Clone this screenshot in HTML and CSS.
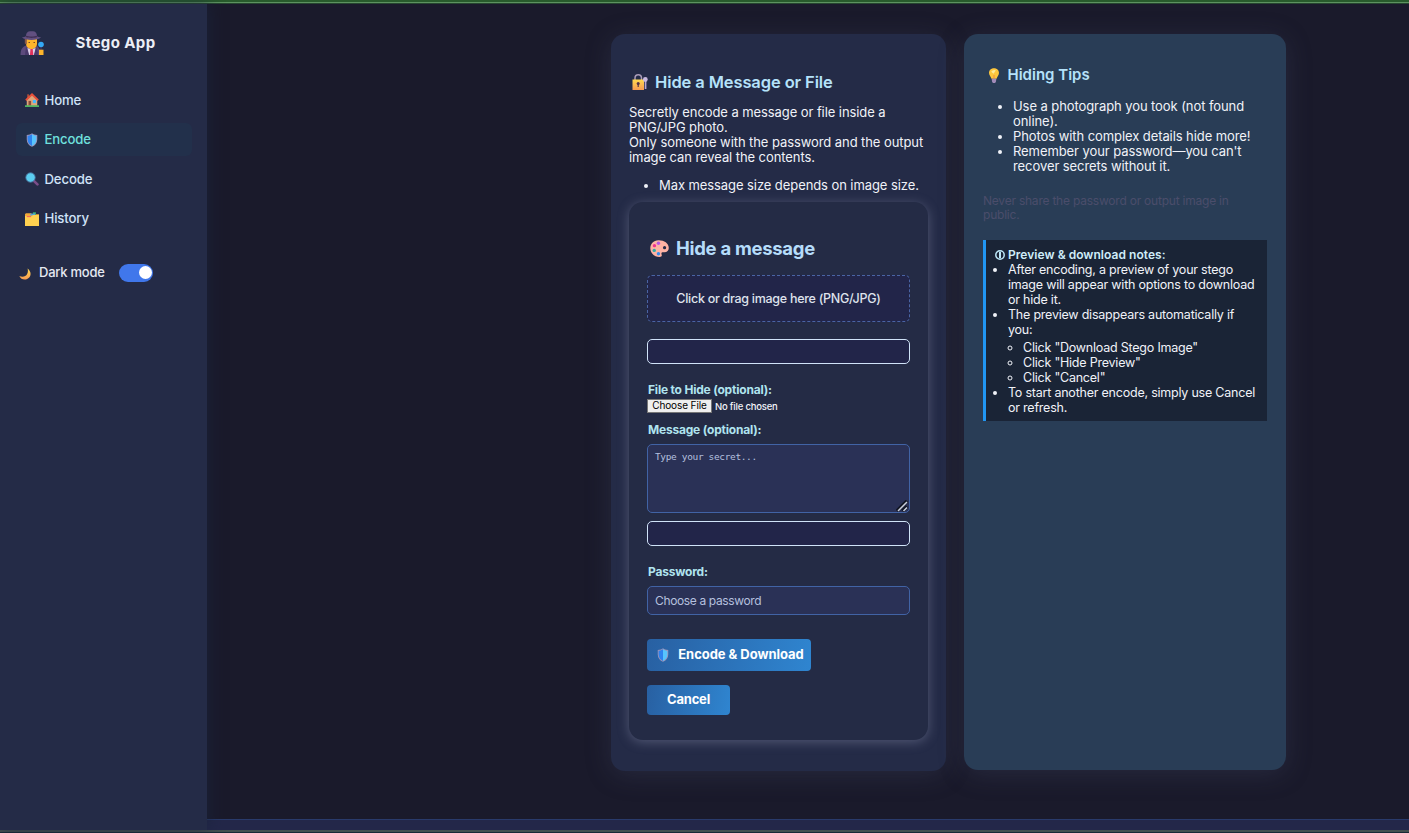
FILE: index.html
```html
<!DOCTYPE html>
<html lang="en">
<head>
<meta charset="utf-8">
<title>Stego App</title>
<link rel="stylesheet" href="styles.css">
</head>
<body>
<svg width="0" height="0" class="defs" aria-hidden="true">
  <defs>
    <linearGradient id="gold" x1="0" y1="0" x2="0" y2="1"><stop offset="0" stop-color="#ffd94f"/><stop offset="1" stop-color="#f79a52"/></linearGradient>
    <symbol id="shield" viewBox="0 0 16 16"><path d="M8 .3C6.500 1.500 4.500 2 2 2.200V7.500c0 4 2.500 7 6 8.300 3.500-1.300 6-4.300 6-8.300V2.200C11.500 2 9.500 1.500 8 .3z" fill="#9c93b8"/><path d="M8 1.300C6.500 2.300 5 2.900 3 3.100V7.500c0 3.400 2 6 5 7.300z" fill="#2f83ee"/><path d="M8 1.300c1.500 1 3 1.600 5 1.800V7.500c0 3.400-2 6-5 7.300z" fill="#57c4fd"/></symbol>
  </defs>
</svg>
<div class="strip-top"></div>
<div class="app">
  <aside class="sidebar">
    <div class="brand">
      <svg class="brand-icon" viewBox="0 0 24 24"><path d="M.5 24c0-5 1.500-8.500 6-9.500h9.500c3 1 4 4.500 4 9.500z" fill="#5c4a7c"/><path d="M6 7.500h11v5c0 3.200-2.300 5.500-5.500 5.500S6 15.700 6 12.500z" fill="#fdb52c"/><path d="M4.800 7h2v6.500l-2-1z" fill="#8b5a48"/><path d="M7.500 17l4 1.500 4-1.500-1.500 7H9z" fill="#ddd0e8"/><path d="M10.500 18h2.200l.6 6h-3.400z" fill="#e2325c"/><path d="M6 15l3 9H5zM17 15l-3 9h4z" fill="#49386a"/><path d="M1.800 6.300c1.700 0 3-.3 4-1C6.500 1.500 7.500.2 11.500.3c4-.1 5 1.200 5.700 5 1 .7 2.300 1 4 1-2 1.900-5.500 2.700-9.700 2.700S3.800 8.200 1.800 6.300z" fill="#625080"/><path d="M6 4.700c3 1 8 1 11 0l.3 1.300c-3 1.200-8.500 1.200-11.500 0z" fill="#423055"/><path d="M8.500 11.500h1.500M13.500 11.500H15" stroke="#7a4b28" stroke-width="1.200"/><path d="M20.300 16h1.400v3h-1.400z" fill="#43365d"/><circle cx="21" cy="13.500" r="2.800" fill="#34a9f5"/><path d="M19 18.700h4.500V24H19z" fill="#fdb52c"/></svg>
      <span class="brand-name">Stego App</span>
    </div>
    <nav class="nav">
      <a class="nav-item"><svg class="nav-icon" viewBox="0 0 16 16"><path d="M2 8l6-6 6 6v7H2z" fill="#dca67b"/><path d="M2.500 1.500h2.200V6H2.500z" fill="#a84e3c"/><path d="M8 0L.3 7.500l1.300 1.500L8 3l6.400 6 1.300-1.500z" fill="#e8503a"/><path d="M4 9h3v5.500H4z" fill="#8a4a39"/><path d="M9 8h3.500v3.500H9z" fill="#45b7ff"/><path d="M0 14h16v2H0z" fill="#51b461"/></svg><span>Home</span></a>
      <a class="nav-item active"><svg class="nav-icon"><use href="#shield"/></svg><span>Encode</span></a>
      <a class="nav-item"><svg class="nav-icon" viewBox="0 0 16 16"><path d="M9.500 9.500l4.700 4.700" stroke="#7b4d89" stroke-width="3" stroke-linecap="round"/><circle cx="6.300" cy="6.300" r="5.400" fill="#5bcdf0" stroke="#486f9a" stroke-width="1"/></svg><span>Decode</span></a>
      <a class="nav-item"><svg class="nav-icon" viewBox="0 0 16 16"><path d="M0 2.500L1 1.500h6l1 1h8V16H0z" fill="#f2a93a"/><path d="M9 .3h3.500v3H9z" fill="#3fae72"/><path d="M6 1.800h5.500V4H6z" fill="#57a4d8"/><path d="M0 4.500h8l1-1.200h7V16H0z" fill="#ffd150"/><path d="M2 5.300h5" stroke="#f4525e" stroke-width="1.100"/></svg><span>History</span></a>
    </nav>
    <div class="mode">
      <svg class="moon" viewBox="0 0 14 14"><path d="M10 .5c5 4 4.500 10-.5 12.300C6 14.400 2 13 .4 9.300 4 11 8 10 9.500 7 10.600 5 10.600 2.500 10 .5z" fill="url(#gold)"/></svg>
      <span class="mode-label">Dark mode</span><span class="toggle"><span class="knob"></span></span>
    </div>
  </aside>
  <div class="content">
    <main class="main">
      <section class="card">
        <h2 class="title"><svg class="title-icon" viewBox="0 0 16 16"><path d="M3 6.500V4.300C3-.3 9.500-.3 9.500 4.300v2.200" fill="none" stroke="#a99bb8" stroke-width="1.500"/><path d="M.5 5.500h11.500V16H.5z" fill="url(#gold)"/><path d="M12.700 7h1.700v8h-1.700z" fill="#b9a6d4"/><circle cx="13.300" cy="5.500" r="2.400" fill="#c8b8df"/><circle cx="6.200" cy="9.500" r="1.500" fill="#543148"/><path d="M5.600 10h1.200v3H5.600z" fill="#543148"/></svg><span>Hide a Message or File</span></h2>
        <p class="intro">Secretly encode a message or file inside a<br>PNG/JPG photo.<br>Only someone with the password and the output<br>image can reveal the contents.</p>
        <ul class="list limit"><li>Max message size depends on image size.</li></ul>
        <form class="panel">
          <h3 class="panel-title"><svg class="palette" viewBox="0 0 18 16"><path d="M8 .3C3 .5.200 4 .3 8.300.5 13 4.500 16 9 16c2 0 2.500-1 2-2.200-.6-1.700.2-2.500 2-2.200 2.800.4 4.800-1.500 4.800-4C17.800 3 13 .1 8 .3z" fill="#ffb3a4"/><circle cx="8" cy="3" r="1.600" fill="#b653e6"/><circle cx="4.200" cy="5.300" r="1.600" fill="#f0338e"/><circle cx="4" cy="9.800" r="1.600" fill="#33aaa4"/><circle cx="8" cy="13" r="1.600" fill="#338cf0"/><circle cx="13.800" cy="7.200" r="1.500" fill="#252c48"/></svg><span>Hide a message</span></h3>
          <div class="dropzone">Click or drag image here (PNG/JPG)</div>
          <div class="preview"></div>
          <label class="label label-file">File to Hide (optional):</label>
          <div class="file"><span class="file-button">Choose File</span><span class="file-name">No file chosen</span></div>
          <label class="label label-message">Message (optional):</label>
          <div class="textarea"><span>Type your secret...</span><svg class="grip" viewBox="0 0 12 12"><path d="M1 11L11 1M6.500 11L11 6.500" stroke="#111522" stroke-width="3.500"/><path d="M2 11L11 2M7.500 11L11 7.500" stroke="#cbd0dd" stroke-width="1.500"/></svg></div>
          <div class="preview preview-message"></div>
          <label class="label label-password">Password:</label>
          <input class="password" type="text" placeholder="Choose a password">
          <button class="button encode" type="button"><svg class="button-icon"><use href="#shield"/></svg><span>Encode &amp; Download</span></button>
          <button class="button cancel" type="button">Cancel</button>
        </form>
      </section>
      <section class="card tips">
        <h2 class="title tips-title"><svg class="bulb" viewBox="0 0 12 16"><path d="M6 .3C2.500.3.700 2.700.7 5.200c0 2.300 1.800 3.600 2.600 6.300h5.400c.8-2.700 2.600-4 2.600-6.300C11.300 2.700 9.500.3 6 .3z" fill="#ffc83d"/><path d="M3 4Q5 1 8 2.500L5.500 6z" fill="#ffec9a"/><path d="M6 7.500v4" stroke="#f29342" stroke-width="1.200"/><path d="M3.500 11.500h5l-.5 3.500-1 1H5l-1-1z" fill="#a28bb8"/></svg><span>Hiding Tips</span></h2>
        <ul class="list tips-list"><li>Use a photograph you took (not found<br>online).</li><li>Photos with complex details hide more!</li><li>Remember your password—you can't<br>recover secrets without it.</li></ul>
        <p class="warning">Never share the password or output image in<br>public.</p>
        <div class="notes">
          <div class="notes-title"><svg class="info" viewBox="0 0 10 10"><circle cx="5" cy="5" r="4.200" fill="none" stroke="#bce6f7" stroke-width="1.500"/><path d="M5 1.800v6.400" stroke="#bce6f7" stroke-width="2"/></svg><b>Preview &amp; download notes:</b></div>
          <ul class="notes-list"><li>After encoding, a preview of your stego<br>image will appear with options to download<br>or hide it.</li><li>The preview disappears automatically if<br>you:<ul class="notes-sub"><li>Click "Download Stego Image"</li><li>Click "Hide Preview"</li><li>Click "Cancel"</li></ul></li><li>To start another encode, simply use Cancel<br>or refresh.</li></ul>
        </div>
      </section>
    </main>
    <footer class="footer"></footer>
  </div>
</div>
<div class="strip-bottom"></div>
</body>
</html>
```

FILE: styles.css
```css
* { box-sizing: border-box; }
body { margin: 0; height: 833px; overflow: hidden; display: flex; flex-direction: column; background: #1a1a2b; color: #f0f2f8; font: 13px/15px Inter, "Liberation Sans", sans-serif; }
h2, h3, p, ul { margin: 0; }
svg { display: block; flex: none; }
.defs { position: absolute; }
.strip-top { height: 4px; flex: none; background: linear-gradient(#285b2c 0 2px, #5d9360 2px 3px, #25452f 3px); }
.strip-bottom { height: 3px; flex: none; background: linear-gradient(#42504f 0 2px, #172a36 2px); }
.app { flex: 1; display: flex; min-height: 0; }
.sidebar { position: relative; z-index: 1; width: 207px; flex: none; background: #242b47; box-shadow: 2px 0 14px rgba(25,35,60,.7); padding: 25px 15px 0 16px; }
.brand { display: flex; align-items: center; height: 26px; }
.brand-icon { width: 24px; height: 24px; margin: 2px 31.500px 0 4px; }
.brand-name { font-size: 15px; font-weight: 700; letter-spacing: .4px; color: #eceef5; }
.nav { margin-top: 28px; display: flex; flex-direction: column; gap: 6.600px; }
.nav-item { height: 33px; padding: 1px 0 0 9px; display: flex; align-items: center; gap: 5.500px; border-radius: 6px; color: #d0e3f8; font-size: 13.200px; font-weight: 500; letter-spacing: -.15px; }
.nav-item.active { background: #22304b; color: #6fe0dd; }
.nav-icon { width: 14px; height: 14px; }
.mode { display: flex; align-items: center; margin: 28px 0 0 3px; height: 20px; font-size: 13px; font-weight: 500; letter-spacing: -.25px; color: #e6e9f2; }
.moon { width: 12px; height: 12px; margin-top: 3px; }
.mode-label { width: 65px; margin-left: 8px; white-space: nowrap; }
.toggle { width: 34px; height: 18px; margin-left: 15px; padding: 2px 1.500px; border-radius: 9px; background: #4077eb; display: flex; justify-content: flex-end; }
.knob { width: 13px; height: 13px; border-radius: 50%; background: #fff; }
.content { flex: 1; display: flex; flex-direction: column; }
.main { flex: 1; display: flex; align-items: flex-start; gap: 18px; padding: 30px 0 0 404px; }
.card { width: 335px; height: 737px; border-radius: 14px; background: #242b47; padding: 38px 18px 0; box-shadow: 0 4px 26px rgba(80,86,120,.25); }
.title { display: flex; align-items: center; height: 20px; font-size: 16.500px; line-height: 20px; font-weight: 600; letter-spacing: -.11px; color: #b5e2fa; }
.title-icon { width: 16px; height: 16px; margin: 0 7px 0 3px; }
.intro { margin-top: 13px; white-space: nowrap; letter-spacing: -.08px; }
.list { padding-left: 30px; white-space: nowrap; letter-spacing: -.08px; }
.limit { margin-top: 13px; }
.panel { margin-top: 9px; height: 538px; width: 299px; padding: 35px 18px 0; border-radius: 14px; background: #242b45; box-shadow: 0 2px 12px rgba(150,155,185,.4); display: flex; flex-direction: column; align-items: flex-start; }
.panel-title { display: flex; align-items: center; height: 22px; font-size: 18.500px; line-height: 22px; font-weight: 700; letter-spacing: -.3px; color: #b5dcfa; }
.palette { width: 19px; height: 17px; margin: 1px 7px 0 3px; }
.dropzone { width: 263px; height: 47px; margin-top: 16px; border: 1px dashed #4a64a4; border-radius: 5px; background: #222549; display: flex; align-items: center; justify-content: center; font-size: 12.500px; font-weight: 500; letter-spacing: -.28px; color: #dfe2ec; }
.preview { width: 263px; height: 25px; margin-top: 17px; border: 1px solid #d0e3f8; border-radius: 5px; background: #222549; }
.label { padding-left: 1px; font-size: 12px; font-weight: 700; line-height: 15px; letter-spacing: -.2px; color: #b0e4ef; }
.label-file { margin-top: 18px; }
.file { display: flex; align-items: center; margin-top: 2px; height: 14px; }
.file-button { height: 14px; width: 65px; padding-bottom: 1px; border: 1px solid #777; background: #efefef; color: #000; font-size: 10px; line-height: 11px; letter-spacing: -.1px; text-align: center; }
.file-name { margin: 1px 0 0 3px; font-size: 9.500px; font-weight: 500; line-height: 14px; letter-spacing: -.2px; }
.label-message { margin-top: 9px; }
.textarea { width: 263px; height: 69px; margin-top: 7px; border: 1px solid #4163a5; border-radius: 5px; background: #2a3156; padding: 5px 1px 0 7px; display: flex; flex-direction: column; justify-content: space-between; font: 9.500px/14px "DejaVu Sans Mono", monospace; letter-spacing: -.36px; color: #b5c0df; }
.grip { width: 12px; height: 12px; align-self: flex-end; }
.preview-message { margin-top: 8px; }
.label-password { margin-top: 18px; }
.password { width: 263px; height: 29px; margin-top: 7px; padding: 0 7px; border: 1px solid #4163a5; border-radius: 5px; background: #2a3156; font: 12px Inter, sans-serif; letter-spacing: -.36px; color: #fff; outline: 0; }
.password::placeholder { color: #b5c0df; }
.button { border: 0; padding: 0 0 2px; border-radius: 4px; background: linear-gradient(100deg, #2860a2, #2f85d0); color: #fff; font: 700 13px/16px Inter, sans-serif; letter-spacing: -.2px; display: flex; align-items: center; justify-content: center; }
.encode { width: 164px; height: 32px; margin-top: 24px; padding-left: 2px; letter-spacing: -.04px; }
.cancel { width: 83px; height: 30px; margin-top: 14px; }
.button-icon { width: 14px; height: 14px; margin: 2px 8px 0 0; }
.tips { width: 322px; height: 736px; background: #293d56; padding: 31px 19px 0; }
.tips-title { font-size: 15px; letter-spacing: 0; }
.bulb { width: 12px; height: 15px; margin: 0 8px 0 4.500px; }
.tips-list { margin-top: 14px; }
.warning { margin-top: 20px; font-size: 12px; line-height: 14px; letter-spacing: -.22px; color: #4b4d6b; white-space: nowrap; }
.notes { width: 284px; height: 181px; margin-top: 18px; border-left: 3px solid #2196f3; background: #1a2436; padding: 7px 0 0 9px; font-size: 12.500px; letter-spacing: -.22px; white-space: nowrap; }
.notes-title { display: flex; align-items: center; gap: 3px; font-size: 12px; letter-spacing: .04px; color: #cfedf9; }
.notes-title b { font-weight: 600; }
.info { width: 10px; height: 10px; }
.notes-list { padding-left: 13px; }
.notes-sub { padding: 3px 0 0 15px; }
.footer { height: 11px; flex: none; border-top: 1px solid #293a6b; background: #232749; }
```
